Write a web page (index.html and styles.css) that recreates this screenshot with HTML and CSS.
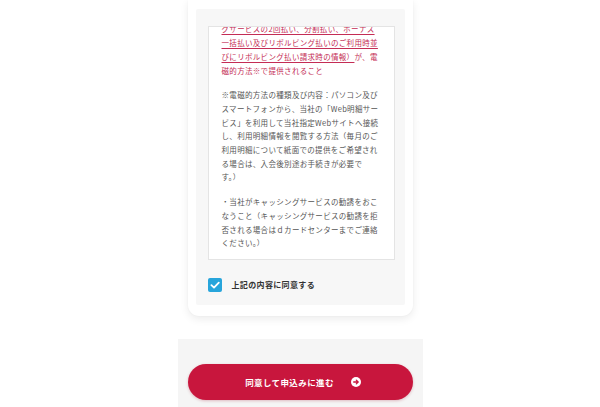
FILE: index.html
```html
<!DOCTYPE html>
<html lang="ja">
<head>
<meta charset="utf-8">
<title>同意して申込み</title>
<link rel="stylesheet" href="styles.css">
</head>
<body>
<div class="column">
  <section class="card">
    <div class="panel">
      <div class="terms">
        <div class="terms-inner">
          <p class="red"><span class="ul">当社が、本人の利用明細情報（ショッピン<br>グサービスの2回払い、分割払い、ボーナス<br>一括払い及びリボルビング払いのご利用時並<br>びにリボルビング払い請求時の情報）</span>が、電<br>磁的方法※で提供されること</p>
          <p>※電磁的方法の種類及び内容：パソコン及び<br>スマートフォンから、当社の「Web明細サー<br>ビス」を利用して当社指定Webサイトへ接続<br>し、利用明細情報を閲覧する方法（毎月のご<br>利用明細について紙面での提供をご希望され<br>る場合は、入会後別途お手続きが必要で<br>す。）</p>
          <p>・当社がキャッシングサービスの勧誘をおこ<br>なうこと（キャッシングサービスの勧誘を拒<br>否される場合はｄカードセンターまでご連絡<br>ください。）</p>
        </div>
      </div>
      <label class="agree">
        <span class="check">
          <svg viewBox="0 0 14 14" width="14" height="14"><path d="M3.4 7.2 L6 9.6 L10.8 4.6" fill="none" stroke="#fff" stroke-width="1.8" stroke-linecap="round" stroke-linejoin="round"/></svg>
        </span>
        <span class="agree-text">上記の内容に同意する</span>
      </label>
    </div>
  </section>
  <div class="footer">
    <button class="submit" type="button">
      <span class="submit-text">同意して申込みに進む</span>
      <span class="arrow">
        <svg viewBox="0 0 10 10" width="10" height="10"><circle cx="5" cy="5" r="5" fill="#fff"/><path d="M2.7 5 H7.1 M5.3 3.1 L7.2 5 L5.3 6.9" fill="none" stroke="#c8163d" stroke-width="1.3" stroke-linecap="round" stroke-linejoin="round"/></svg>
      </span>
    </button>
  </div>
</div>
</body>
</html>
```
FILE: styles.css
```css
html, body {
  margin: 0;
  padding: 0;
  background: #ffffff;
}
body {
  font-family: "Noto Sans CJK JP", "Noto Sans", sans-serif;
  overflow: hidden;
  height: 407px;
}
.column {
  width: 245px;
  margin: 0 auto;
}
.card {
  margin: 0 10px;
  background: #ffffff;
  border-radius: 0 0 11px 11px;
  padding: 9px 8px 11px 8px;
  box-shadow: 0 3px 8px rgba(0, 0, 0, 0.08), 0 0 2px rgba(0, 0, 0, 0.04);
}
.panel {
  background: #f7f7f7;
  border-radius: 2px;
  padding: 17px 10px 13px 12px;
}
.terms {
  box-sizing: border-box;
  height: 234px;
  background: #ffffff;
  border: 1px solid #e4e4e4;
  overflow: hidden;
  display: flex;
  flex-direction: column;
  justify-content: flex-end;
  padding: 0 6px 9px 13px;
}
.terms-inner p {
  margin: 11px 0 0 0;
  font-size: 7.5px;
  line-height: 13.7px;
  letter-spacing: 0.32px;
  color: #555555;
  white-space: nowrap;
}
.terms-inner p.red {
  color: #c42c55;
  margin-top: 0;
}
.ul {
  text-decoration: underline;
  text-underline-offset: 1.5px;
}
.agree {
  display: flex;
  align-items: center;
  margin-top: 18px;
  gap: 10px;
}
.check {
  width: 14px;
  height: 14px;
  border-radius: 2px;
  background: #27a5db;
  display: flex;
}
.agree-text {
  font-size: 8px;
  font-weight: 700;
  letter-spacing: 0.35px;
  color: #333333;
  line-height: 14px;
}
.footer {
  margin-top: 23px;
  background: #f5f5f5;
  padding: 25px 10px 7px 10px;
}
.submit {
  width: 100%;
  height: 36px;
  border: none;
  border-radius: 18px;
  background: #c8163d;
  color: #ffffff;
  display: flex;
  align-items: center;
  justify-content: center;
  gap: 17px;
  padding: 0 0 0 6px;
  font-family: "Noto Sans CJK JP", "Noto Sans", sans-serif;
  box-shadow: 0 1px 3px rgba(160, 10, 40, 0.25);
}
.submit-text {
  font-size: 8.5px;
  font-weight: 700;
  letter-spacing: 0.4px;
}
.arrow {
  display: flex;
}
```
